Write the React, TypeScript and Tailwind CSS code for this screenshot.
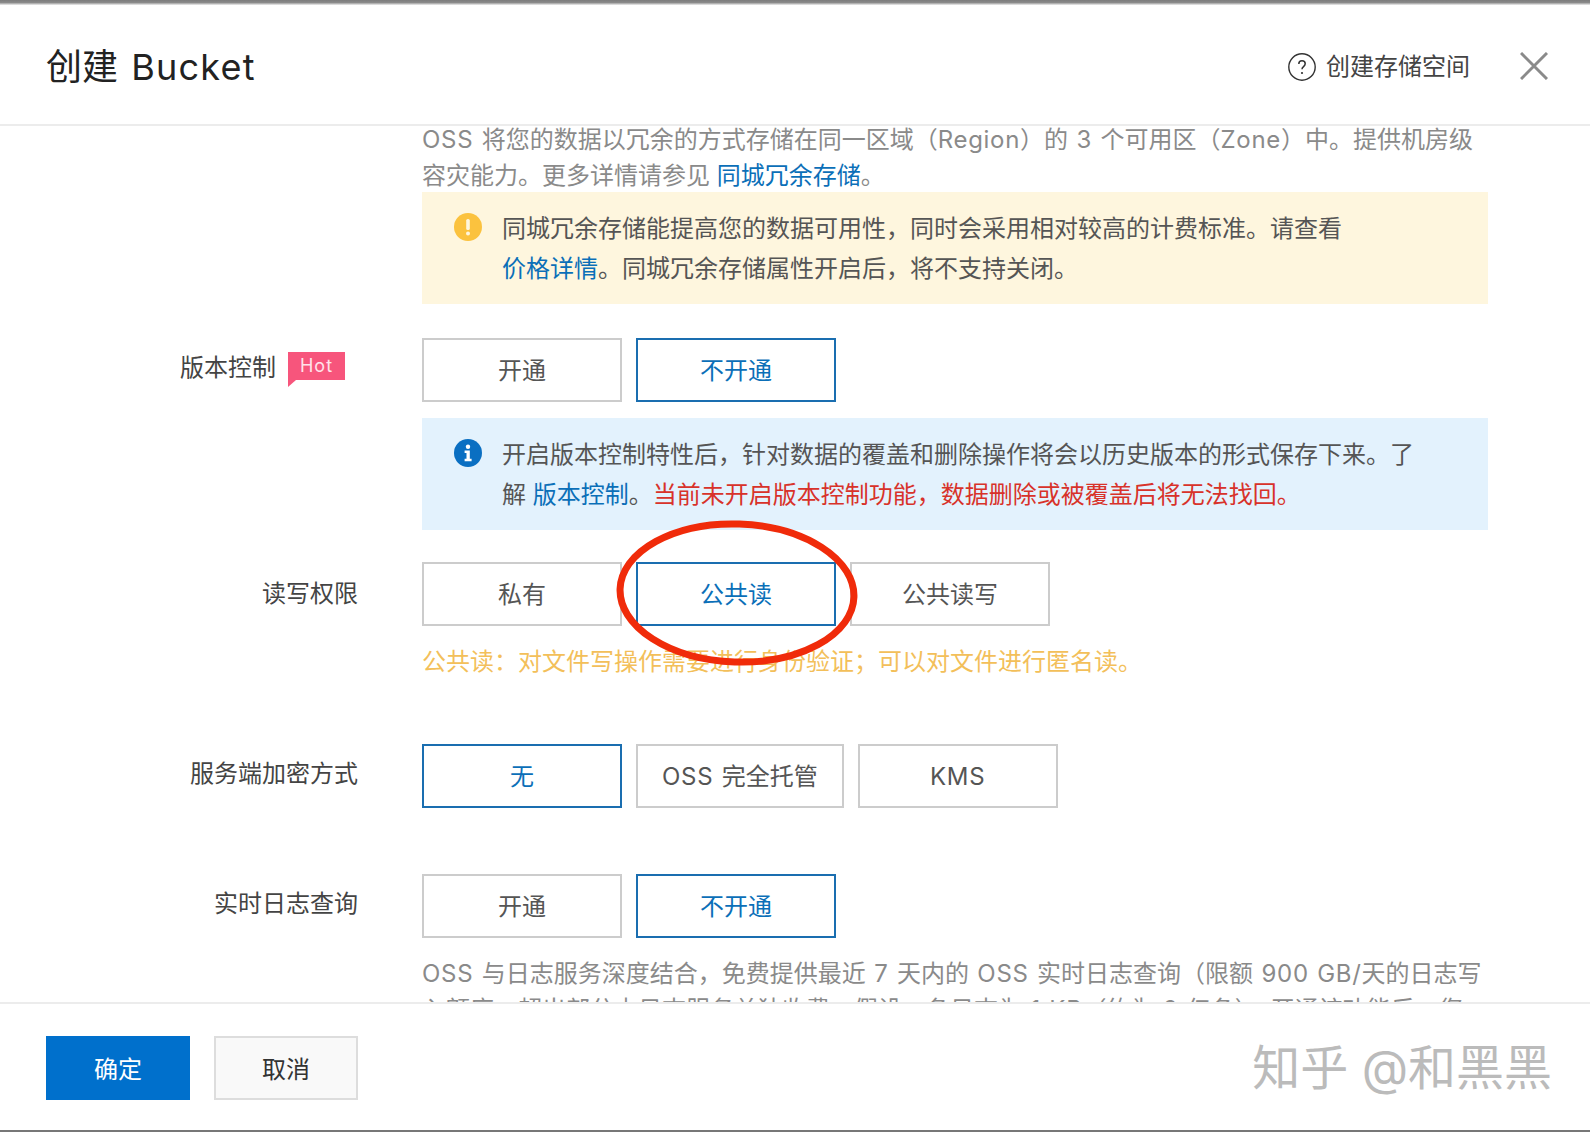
import type { ReactNode } from "react";

type Option = { id: string; text: ReactNode; active?: boolean };

// latin runs sit a little wider in the reference than Inter sets them
function L({ children }: { children: ReactNode }) {
  return <span className="tracking-[0.7px] [word-spacing:1px]">{children}</span>;
}

function OptionButton({ text, active }: Option) {
  return (
    <button
      className={
        active
          ? "h-16 min-w-[200px] border-2 border-[#1a6eb0] bg-white px-[24px] pt-[2px] text-[24px] text-[#0b6fb8]"
          : "h-16 min-w-[200px] border-2 border-[#cccccc] bg-white px-[24px] pt-[2px] text-[24px] text-[#555555]"
      }
    >
      {text}
    </button>
  );
}

function OptionGroup({ options }: { options: Option[] }) {
  return (
    <div className="flex gap-[14px]">
      {options.map((item) => (
        <OptionButton key={item.id} {...item} />
      ))}
    </div>
  );
}

function Row({
  label,
  badge,
  children,
  className,
  labelClass = "pt-[12px]",
}: {
  label?: string;
  badge?: boolean;
  children: ReactNode;
  className?: string;
  labelClass?: string;
}) {
  return (
    <div className={`grid grid-cols-[358px_1066px] gap-x-[64px] ${className ?? ""}`}>
      <div className={`flex items-start justify-end text-[24px] leading-[36px] text-[#444444] ${labelClass}`}>
        {label && <span>{label}</span>}
        {badge && (
          <span className="relative mt-[2px] ml-[12px] mr-[13px] flex h-[28px] w-[57px] items-center justify-center bg-[#f7557c] text-[18px] leading-none tracking-[1px] text-[#ffe3ea]">
            Hot
            <span className="absolute top-full left-0 h-[7px] w-[8px] bg-[#f7557c] [clip-path:polygon(0_0,100%_0,0_100%)]" />
          </span>
        )}
      </div>
      <div>{children}</div>
    </div>
  );
}

function Notice({ tone, icon, children, textClass }: { tone: string; icon: ReactNode; children: ReactNode; textClass: string }) {
  return (
    <div className={`flex h-[112px] gap-[20px] pt-[17px] pl-[32px] text-[24px] leading-[40px] text-[#555555] ${tone}`}>
      <div className="shrink-0 pt-[4px]">{icon}</div>
      <p className={textClass}>{children}</p>
    </div>
  );
}

function WarningIcon() {
  return (
    <svg width="28" height="28" viewBox="0 0 28 28">
      <circle cx="14" cy="14" r="14" fill="#fbc23e" />
      <rect x="12.2" y="6" width="3.6" height="11" rx="1.6" fill="#fef6de" />
      <circle cx="14" cy="20.6" r="2" fill="#fef6de" />
    </svg>
  );
}

function InfoIcon() {
  return (
    <svg width="28" height="28" viewBox="0 0 28 28">
      <circle cx="14" cy="14" r="14" fill="#0a6fc2" />
      <circle cx="14" cy="7.8" r="2.2" fill="#ffffff" />
      <path d="M10.6 11.6h5.2v8.2h1.8v2.4h-7v-2.4h1.9v-5.8h-1.9z" fill="#ffffff" />
    </svg>
  );
}

export default function App() {
  return (
    <div className="relative flex h-[1132px] w-[1590px] flex-col overflow-hidden bg-white font-['Inter','Noto_Sans_CJK_SC',sans-serif]">
      <div className="h-[5px] shrink-0 bg-gradient-to-b from-[#7c7c7c] via-[#8a8a8a] to-[#f0f0f0]" />

      <header className="flex h-[121px] shrink-0 items-center justify-between border-b-2 border-[#ececec] pt-[4px] pr-[42px] pl-[46px]">
        <h1 className="text-[36px] leading-none text-[#222222]">
          创建<span className="tracking-[1.2px] [word-spacing:2px]"> Bucket</span>
        </h1>
        <div className="flex items-center">
          <svg width="28" height="28" viewBox="0 0 28 28" fill="none">
            <circle cx="14" cy="14" r="13.2" stroke="#333333" strokeWidth="1.4" />
            <path d="M10.8 11c0-2 1.4-3.2 3.2-3.2s3.2 1.2 3.2 3c0 2.8-3.2 2.8-3.2 5.4" stroke="#333333" strokeWidth="1.5" />
            <circle cx="14" cy="20" r="1.1" fill="#333333" />
          </svg>
          <span className="ml-[10px] text-[24px] text-[#444444]">创建存储空间</span>
          <svg className="ml-[50px] mb-[2px]" width="28" height="28" viewBox="0 0 28 28" fill="none">
            <path d="M1 1l26 26M27 1L1 27" stroke="#8a8a8a" strokeWidth="3" />
          </svg>
        </div>
      </header>

      <main className="min-h-0 flex-1 overflow-hidden">
        <div className="-mt-[4px]">
          <Row>
            <p className="-mb-[2px] text-[24px] leading-[36px] text-[#8a8a8a]">
              <L>OSS </L>将您的数据以冗余的方式存储在同一区域（<L>Region</L>）的<L> 3 </L>个可用区（<L>Zone</L>）中。提供机房级容灾能力。更多详情请参见{" "}
              <a className="text-[#0b6fb8]">同城冗余存储</a>。
            </p>
            <Notice tone="bg-[#fef6de]" icon={<WarningIcon />} textClass="w-[850px]">
              同城冗余存储能提高您的数据可用性，同时会采用相对较高的计费标准。请查看
              <a className="text-[#0b6fb8]">价格详情</a>。同城冗余存储属性开启后，将不支持关闭。
            </Notice>
          </Row>

          <Row label="版本控制" badge className="mt-[34px]">
            <OptionGroup options={[{ id: "on", text: "开通" }, { id: "off", text: "不开通", active: true }]} />
            <div className="mt-4">
              <Notice tone="bg-[#e3f2fd]" icon={<InfoIcon />} textClass="w-[920px]">
                开启版本控制特性后，针对数据的覆盖和删除操作将会以历史版本的形式保存下来。了解{" "}
                <a className="text-[#0b6fb8]">版本控制</a>。
                <span className="text-[#d8322a]">当前未开启版本控制功能，数据删除或被覆盖后将无法找回。</span>
              </Notice>
            </div>
          </Row>

          <Row label="读写权限" labelClass="pt-[14px]" className="mt-[32px]">
            <OptionGroup
              options={[
                { id: "private", text: "私有" },
                { id: "read", text: "公共读", active: true },
                { id: "write", text: "公共读写" },
              ]}
            />
            <p className="mt-[18px] text-[24px] leading-[36px] text-[#f3bf5a]">
              公共读：对文件写操作需要进行身份验证；可以对文件进行匿名读。
            </p>
          </Row>

          <Row label="服务端加密方式" className="mt-[64px]">
            <OptionGroup
              options={[
                { id: "none", text: "无", active: true },
                { id: "oss", text: <><L>OSS </L>完全托管</> },
                { id: "kms", text: <L>KMS</L> },
              ]}
            />
          </Row>

          <Row label="实时日志查询" className="mt-[66px]">
            <OptionGroup options={[{ id: "on", text: "开通" }, { id: "off", text: "不开通", active: true }]} />
            <p className="mt-[18px] text-[24px] leading-[36px] text-[#8a8a8a]">
              <L>OSS </L>与日志服务深度结合，免费提供最近<L> 7 </L>天内的<L> OSS </L>实时日志查询（限额<L> 900 GB/</L>天的日志写入额度，超出部分由日志服务单独收费。假设一条日志为<L> 1 KB</L>（约为<L> 2 </L>亿条），开通该功能后，您
            </p>
          </Row>
        </div>
      </main>

      <footer className="flex h-[128px] shrink-0 items-center justify-between border-t-2 border-[#ececec] pt-[2px] pr-[38px] pl-[46px]">
        <div className="flex gap-[24px]">
          <button className="h-16 w-[144px] bg-[#0070cc] pt-[3px] text-[24px] text-white">确定</button>
          <button className="h-16 w-[144px] border-2 border-[#dddddd] bg-[#f9f9f9] pt-[3px] text-[24px] text-[#333333]">取消</button>
        </div>
        <span className="text-[48px] leading-none text-[#bbbbbb]">知乎 @和黑黑</span>
      </footer>

      <div className="h-[2px] shrink-0 bg-[#777777]" />

      <svg className="pointer-events-none absolute top-[515px] left-[612px]" width="250" height="155" viewBox="0 0 250 155" fill="none">
        <ellipse cx="125" cy="78" rx="117" ry="69" stroke="#f02b0a" strokeWidth="7" transform="rotate(2 125 78)" />
      </svg>
    </div>
  );
}
